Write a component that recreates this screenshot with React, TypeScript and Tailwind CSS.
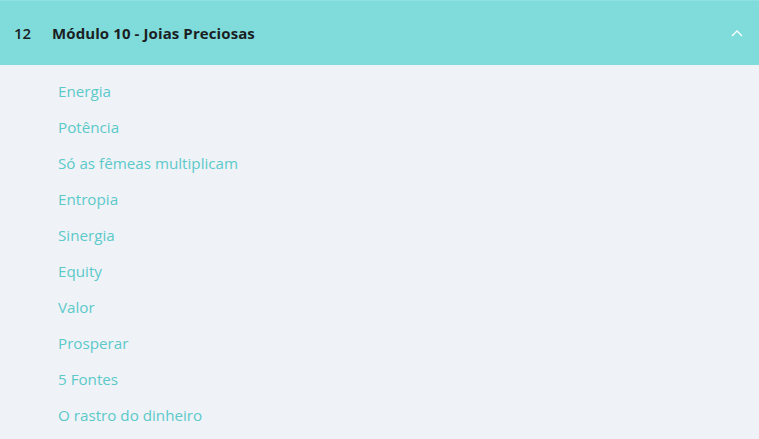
import React from "react";

const items = [
  "Energia",
  "Potência",
  "Só as fêmeas multiplicam",
  "Entropia",
  "Sinergia",
  "Equity",
  "Valor",
  "Prosperar",
  "5 Fontes",
  "O rastro do dinheiro",
];

export default function App() {
  return (
    <div
      className="w-[759px] h-[439px] bg-[#eff3f8] overflow-hidden"
      style={{ fontFamily: "'Open Sans', Lato, sans-serif" }}
    >
      <div className="h-[65px] bg-[#80dbdb] border-t border-[#8fe0e0] flex items-center pl-[14px] pr-[16px]">
        <span className="text-[15px] font-semibold text-[#1b1f23] w-[38px]">12</span>
        <span className="text-[15px] font-bold tracking-[0.1px] text-[#1b1f23]">Módulo 10 - Joias Preciosas</span>
        <svg className="ml-auto" width="12" height="8" viewBox="0 0 12 8" fill="none">
          <path d="M1 7 L6 2 L11 7" stroke="#ffffff" strokeWidth="1.3" />
        </svg>
      </div>
      <div className="flex flex-col pl-[58px] pt-[8px]">
        {items.map((t) => (
          <div key={t} className="h-[36px] flex items-center text-[15.2px] text-[#5cc9c9]">
            {t}
          </div>
        ))}
      </div>
    </div>
  );
}
